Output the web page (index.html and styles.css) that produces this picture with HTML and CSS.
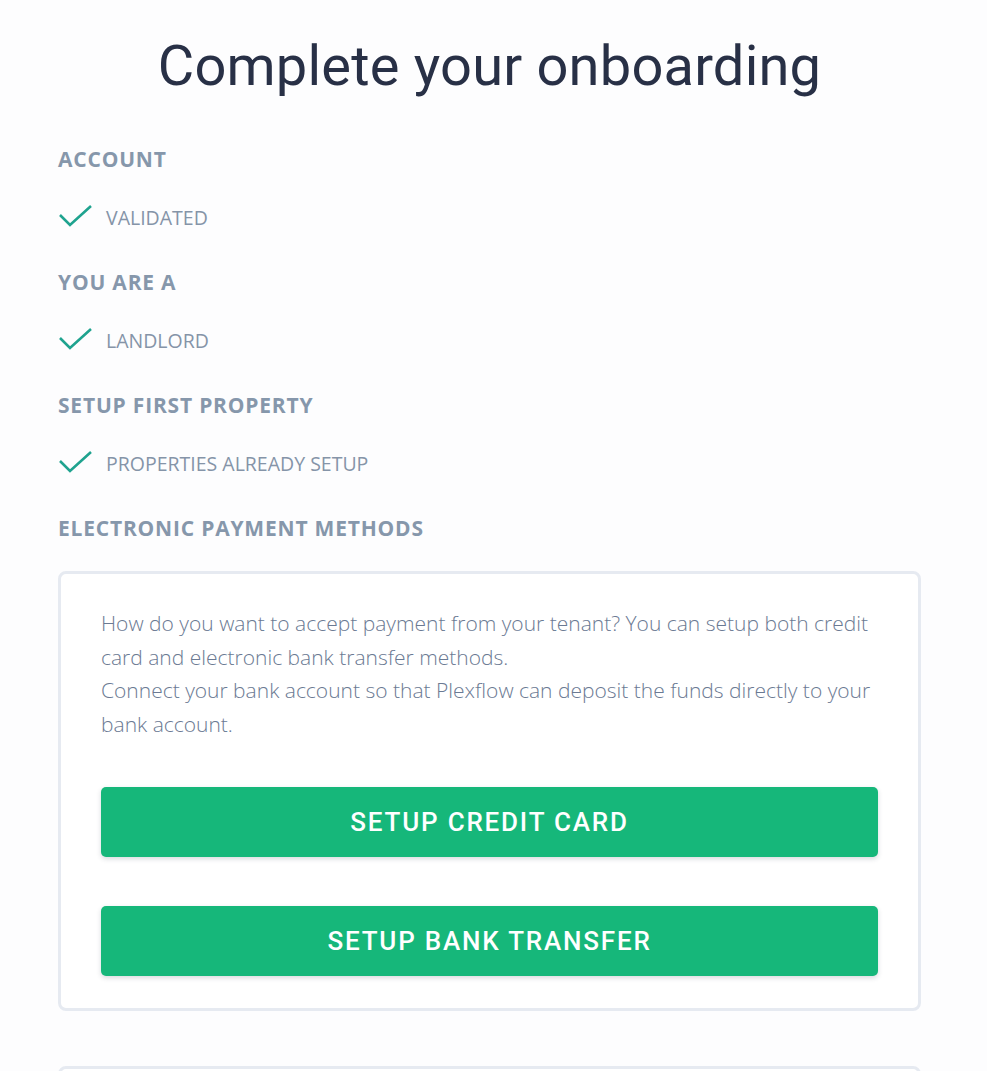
FILE: index.html
```html
<!DOCTYPE html>
<html>
<head>
	<title>Complete your onboarding</title>
	<link rel="stylesheet" href="styles.css">
</head>
<body>
	<div class="page">
		<h1 class="title">Complete your onboarding</h1>

		<div class="step">
			<h2 class="step-title">ACCOUNT</h2>
			<div class="step-done">
				<svg class="check" width="34" height="24" viewBox="0 0 34 24"><polyline points="1,11 11,21 32,2" fill="none" stroke="#1fa38f" stroke-width="2.6"/></svg>
				<span>VALIDATED</span>
			</div>
		</div>

		<div class="step">
			<h2 class="step-title">YOU ARE A</h2>
			<div class="step-done">
				<svg class="check" width="34" height="24" viewBox="0 0 34 24"><polyline points="1,11 11,21 32,2" fill="none" stroke="#1fa38f" stroke-width="2.6"/></svg>
				<span>LANDLORD</span>
			</div>
		</div>

		<div class="step">
			<h2 class="step-title">SETUP FIRST PROPERTY</h2>
			<div class="step-done">
				<svg class="check" width="34" height="24" viewBox="0 0 34 24"><polyline points="1,11 11,21 32,2" fill="none" stroke="#1fa38f" stroke-width="2.6"/></svg>
				<span>PROPERTIES ALREADY SETUP</span>
			</div>
		</div>

		<div class="step">
			<h2 class="step-title">ELECTRONIC PAYMENT METHODS</h2>
			<div class="card">
				<p class="card-text">How do you want to accept payment from your tenant? You can setup both credit card and electronic bank transfer methods.<br>Connect your bank account so that Plexflow can deposit the funds directly to your bank account.</p>
				<button class="btn" type="button">SETUP CREDIT CARD</button>
				<button class="btn" type="button">SETUP BANK TRANSFER</button>
			</div>
		</div>

		<div class="card card-next"></div>
	</div>
</body>
</html>
```

FILE: styles.css
```css
body {
	margin: 0;
	background-color: #fdfdfe;
	font-family: "Open Sans", sans-serif;
}
.page {
	width: 863px;
	margin-left: 58px;
}
.title {
	margin: 0;
	padding-top: 30px;
	height: 72px;
	text-align: center;
	font-family: Roboto, sans-serif;
	font-weight: 400;
	font-size: 56px;
	line-height: 72px;
	color: #283046;
	letter-spacing: 0.2px;
}
.step-title {
	margin: 0;
	padding-top: 39px;
	font-family: "Open Sans", sans-serif;
	font-weight: 700;
	font-size: 21px;
	line-height: 26px;
	color: #8697ab;
	letter-spacing: 0.8px;
}
.step:first-of-type .step-title {
	padding-top: 44px;
}
.step-done {
	display: flex;
	align-items: center;
	margin-top: 30px;
	height: 28px;
}
.check {
	margin-left: 1px;
	margin-right: 13px;
}
.step-done span {
	font-size: 19.5px;
	color: #8594a8;
	padding-top: 2px;
}
.card {
	margin-top: 30px;
	background-color: #ffffff;
	border: 3px solid #e6eaf1;
	border-radius: 8px;
	padding: 33px 40px 32px 40px;
}
.card-text {
	margin: 0 0 45px 0;
	font-family: "Open Sans", sans-serif;
	font-weight: 300;
	font-size: 21px;
	line-height: 33.7px;
	color: #6b7a93;
}
.btn {
	display: block;
	width: 100%;
	height: 70px;
	margin-bottom: 49px;
	background-color: #16b77a;
	color: #ffffff;
	border: none;
	border-radius: 5px;
	box-shadow: 0 2px 5px rgba(40, 50, 70, 0.18);
	font-family: Roboto, sans-serif;
	font-weight: 500;
	font-size: 26px;
	letter-spacing: 1.8px;
	cursor: pointer;
}
.btn:last-child {
	margin-bottom: 0;
}
.card-next {
	margin-top: 55px;
	height: 40px;
	padding: 0;
}
```
